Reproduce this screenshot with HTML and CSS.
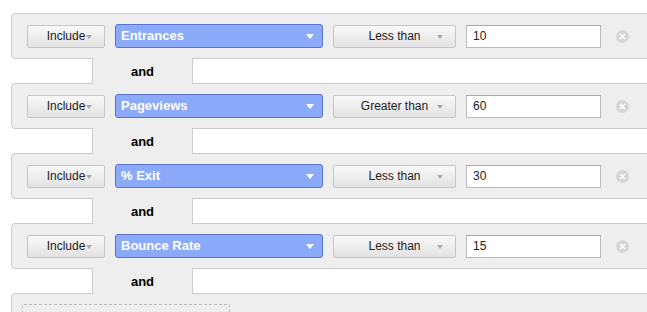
FILE: index.html
```html
<!DOCTYPE html>
<html>
<head>
<meta charset="utf-8">
<link rel="stylesheet" href="styles.css">
</head>
<body>
<div class="filters">
  <div class="row">
    <div class="btn inc">Include<span class="caret"></span></div>
    <div class="metric">Entrances<span class="wcaret"></span></div>
    <div class="btn cmp">Less than<span class="caret"></span></div>
    <div class="val">10</div>
    <svg class="clear" width="13" height="13" viewBox="0 0 13 13"><circle cx="6.5" cy="6.5" r="6.5" fill="#d6d6d6"/><path d="M4 4L9 9M9 4L4 9" stroke="#fff" stroke-width="1.6"/></svg>
  </div>
  <div class="conn">and</div>
  <div class="row">
    <div class="btn inc">Include<span class="caret"></span></div>
    <div class="metric">Pageviews<span class="wcaret"></span></div>
    <div class="btn cmp">Greater than<span class="caret"></span></div>
    <div class="val">60</div>
    <svg class="clear" width="13" height="13" viewBox="0 0 13 13"><circle cx="6.5" cy="6.5" r="6.5" fill="#d6d6d6"/><path d="M4 4L9 9M9 4L4 9" stroke="#fff" stroke-width="1.6"/></svg>
  </div>
  <div class="conn">and</div>
  <div class="row">
    <div class="btn inc">Include<span class="caret"></span></div>
    <div class="metric">% Exit<span class="wcaret"></span></div>
    <div class="btn cmp">Less than<span class="caret"></span></div>
    <div class="val">30</div>
    <svg class="clear" width="13" height="13" viewBox="0 0 13 13"><circle cx="6.5" cy="6.5" r="6.5" fill="#d6d6d6"/><path d="M4 4L9 9M9 4L4 9" stroke="#fff" stroke-width="1.6"/></svg>
  </div>
  <div class="conn">and</div>
  <div class="row">
    <div class="btn inc">Include<span class="caret"></span></div>
    <div class="metric">Bounce Rate<span class="wcaret"></span></div>
    <div class="btn cmp">Less than<span class="caret"></span></div>
    <div class="val">15</div>
    <svg class="clear" width="13" height="13" viewBox="0 0 13 13"><circle cx="6.5" cy="6.5" r="6.5" fill="#d6d6d6"/><path d="M4 4L9 9M9 4L4 9" stroke="#fff" stroke-width="1.6"/></svg>
  </div>
  <div class="conn">and</div>
  <div class="row last">
    <div class="dashed"></div>
  </div>
</div>
</body>
</html>
```
FILE: styles.css
```css
html, body {
  margin: 0;
  background: #fff;
  overflow: hidden;
}
body {
  font-family: "Liberation Sans", Arial, sans-serif;
  width: 647px;
  height: 312px;
}
.filters {
  padding-top: 13px;
  padding-left: 11px;
  width: 720px;
}
.row {
  height: 44px;
  border: 1px solid #cccccc;
  border-radius: 4px;
  background: #eeeeee;
  display: flex;
  align-items: center;
  padding-left: 15px;
}
.btn {
  position: relative;
  box-sizing: border-box;
  height: 23px;
  border: 1px solid #c6c6c6;
  border-radius: 2px;
  background: linear-gradient(#f9f9f9, #e2e2e2);
  font-size: 12px;
  color: #222;
  display: flex;
  align-items: center;
  justify-content: center;
  padding-bottom: 1px;
}
.inc {
  width: 78px;
  margin-right: 10px;
}
.cmp {
  width: 123px;
  margin-right: 10px;
}
.caret {
  position: absolute;
  right: 12px;
  top: 9px;
  width: 0;
  height: 0;
  border-left: 3.5px solid transparent;
  border-right: 3.5px solid transparent;
  border-top: 4px solid #aaaaaa;
}
.metric {
  position: relative;
  box-sizing: border-box;
  width: 208px;
  height: 24px;
  margin-right: 10px;
  border: 1px solid #5a73c6;
  border-radius: 3px;
  background: #8caafa;
  color: #fff;
  font-size: 13px;
  font-weight: bold;
  display: flex;
  align-items: center;
  padding-left: 5px;
  padding-bottom: 1px;
}
.wcaret {
  position: absolute;
  right: 8px;
  top: 9px;
  width: 0;
  height: 0;
  border-left: 4px solid transparent;
  border-right: 4px solid transparent;
  border-top: 5px solid #fff;
}
.val {
  box-sizing: border-box;
  width: 135px;
  height: 23px;
  border: 1px solid #bbbbbb;
  border-top-color: #a8a8a8;
  background: #fff;
  font-size: 12px;
  color: #222;
  display: flex;
  align-items: center;
  padding-left: 6px;
  margin-right: 15px;
}
.clear {
  display: block;
}
.conn {
  position: relative;
  z-index: 1;
  box-sizing: border-box;
  margin: -1px 0 -1px 81px;
  width: 101px;
  height: 26px;
  border-left: 1px solid #cccccc;
  border-right: 1px solid #cccccc;
  background: #eeeeee;
  font-size: 13px;
  font-weight: bold;
  color: #000;
  display: flex;
  align-items: center;
  justify-content: center;
}
.last {
  height: 60px;
  align-items: flex-start;
  padding-left: 10px;
  padding-top: 10px;
}
.dashed {
  width: 206px;
  height: 40px;
  border: 1px dashed #bbbbbb;
  border-radius: 2px;
}
```
